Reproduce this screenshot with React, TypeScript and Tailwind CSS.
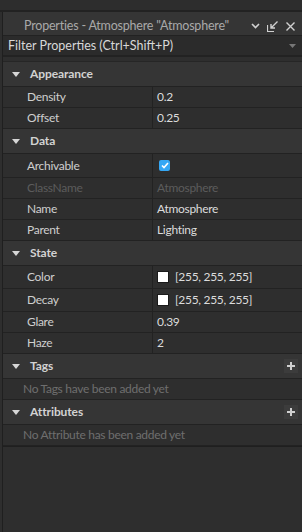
import { ReactNode } from 'react'

const font = { fontFamily: 'Lato, "Noto Sans", sans-serif' }

const Caret = () => (
  <svg width="8" height="5" viewBox="0 0 8 5" className="shrink-0">
    <path d="M0 0 H8 L4 5 Z" fill="#d6d6d6" />
  </svg>
)

const PlusButton = () => (
  <div className="w-[14px] h-[14px] bg-[#3c3c3c] flex items-center justify-center">
    <svg width="8" height="8" viewBox="0 0 8 8">
      <path d="M4 0 V8 M0 4 H8" stroke="#cfcfcf" strokeWidth="2" />
    </svg>
  </div>
)

const Section = ({ title, action }: { title: string; action?: ReactNode }) => (
  <div className="h-[25px] shrink-0 bg-[#353535] border-b border-[#222222] flex items-center pl-[9px] pr-[4px]">
    <Caret />
    <span className="ml-[10px] text-[12px] font-bold tracking-[-0.1px] text-[#d2d2d2] flex-1">{title}</span>
    {action}
  </div>
)

const Row = ({
  name,
  children,
  dim = false,
  tall = ''
}: {
  name: string
  children: ReactNode
  dim?: boolean
  tall?: string
}) => (
  <div className={`flex shrink-0 border-b border-[#222222] ${tall || 'h-[21px]'}`}>
    <div
      className={`w-[150px] shrink-0 border-r border-[#222222] pl-[24px] flex items-center text-[12px] tracking-[-0.3px] ${
        dim ? 'text-[#5c5c5c]' : 'text-[#cfcfcf]'
      }`}
    >
      {name}
    </div>
    <div
      className={`flex-1 pl-[4px] flex items-center text-[12px] tracking-[-0.3px] ${
        dim ? 'text-[#5c5c5c]' : 'text-[#dcdcdc]'
      }`}
    >
      {children}
    </div>
  </div>
)

const Swatch = () => <div className="w-[12px] h-[12px] bg-white border border-[#1a1a1a] mr-[6px]" />

const Empty = ({ text }: { text: string }) => (
  <div className="h-[21px] shrink-0 border-b border-[#222222] flex items-center pl-[20px] text-[12px] tracking-[-0.3px] text-[#6e6e6e]">
    {text}
  </div>
)

export default function App() {
  return (
    <div className="w-[302px] h-[532px] bg-[#2e2e2e] flex flex-col overflow-hidden" style={font}>
      <div className="h-[12px] bg-[#2d2d2d] border-b-2 border-[#222222] shrink-0" />
      <div className="flex-1 ml-[2px] border-l border-[#1f1f1f] flex flex-col">
        {/* title bar */}
        <div className="h-[24px] shrink-0 bg-[#353535] border-b border-[#222222] flex items-center pt-[5px] pl-[21px] pr-[7px]">
          <span className="flex-1 text-[12.5px] tracking-[-0.2px] text-[#a9a9a9] whitespace-nowrap">
            Properties - Atmosphere "Atmosphere"
          </span>
          <div className="flex items-center gap-[7px]">
            <svg width="9" height="6" viewBox="0 0 9 6">
              <path d="M1 1 L4.5 4.5 L8 1" stroke="#d0d0d0" strokeWidth="1.6" fill="none" />
            </svg>
            <svg width="11" height="11" viewBox="0 0 11 11">
              <path d="M0.5 4 V10.5 H7" stroke="#d0d0d0" strokeWidth="1.2" fill="none" />
              <path d="M10.5 0.5 L4.5 6.5 M4 3 V7 H8" stroke="#d0d0d0" strokeWidth="1.4" fill="none" />
            </svg>
            <svg width="9" height="9" viewBox="0 0 9 9" className="ml-[1px]">
              <path d="M0.5 0.5 L8.5 8.5 M8.5 0.5 L0.5 8.5" stroke="#d0d0d0" strokeWidth="1.4" />
            </svg>
          </div>
        </div>
        {/* filter */}
        <div className="h-[21px] shrink-0 bg-[#2b2b2b] border-b-2 border-[#222222] flex items-center pt-[1px] pl-[5px] pr-[6px]">
          <span className="flex-1 text-[12.5px] text-[#d8d8d8] whitespace-nowrap">Filter Properties (Ctrl+Shift+P)</span>
          <svg width="7" height="4" viewBox="0 0 7 4">
            <path d="M0 0 H7 L3.5 4 Z" fill="#777777" />
          </svg>
        </div>
        <div className="h-[5px] shrink-0 bg-[#2e2e2e] border-b border-[#262626]" />

        <Section title="Appearance" />
        <Row name="Density">0.2</Row>
        <Row name="Offset">0.25</Row>

        <Section title="Data" />
        <Row name="Archivable" tall="h-[24px]">
          <div className="ml-[2px] w-[11px] h-[11px] rounded-[2px] bg-[#35a7f4] flex items-center justify-center">
            <svg width="8" height="7" viewBox="0 0 8 7">
              <path d="M1 3.5 L3 5.5 L7 1" stroke="#ffffff" strokeWidth="1.6" fill="none" />
            </svg>
          </div>
        </Row>
        <Row name="ClassName" dim>
          Atmosphere
        </Row>
        <Row name="Name">Atmosphere</Row>
        <Row name="Parent">Lighting</Row>

        <Section title="State" />
        <Row name="Color" tall="h-[23px]">
          <Swatch />
          [255, 255, 255]
        </Row>
        <Row name="Decay" tall="h-[23px]">
          <Swatch />
          [255, 255, 255]
        </Row>
        <Row name="Glare">0.39</Row>
        <Row name="Haze">2</Row>

        <Section title="Tags" action={<PlusButton />} />
        <Empty text="No Tags have been added yet" />
        <Section title="Attributes" action={<PlusButton />} />
        <Empty text="No Attribute has been added yet" />
        <div className="h-[1px] shrink-0 bg-[#1f1f1f]" />
      </div>
    </div>
  )
}
